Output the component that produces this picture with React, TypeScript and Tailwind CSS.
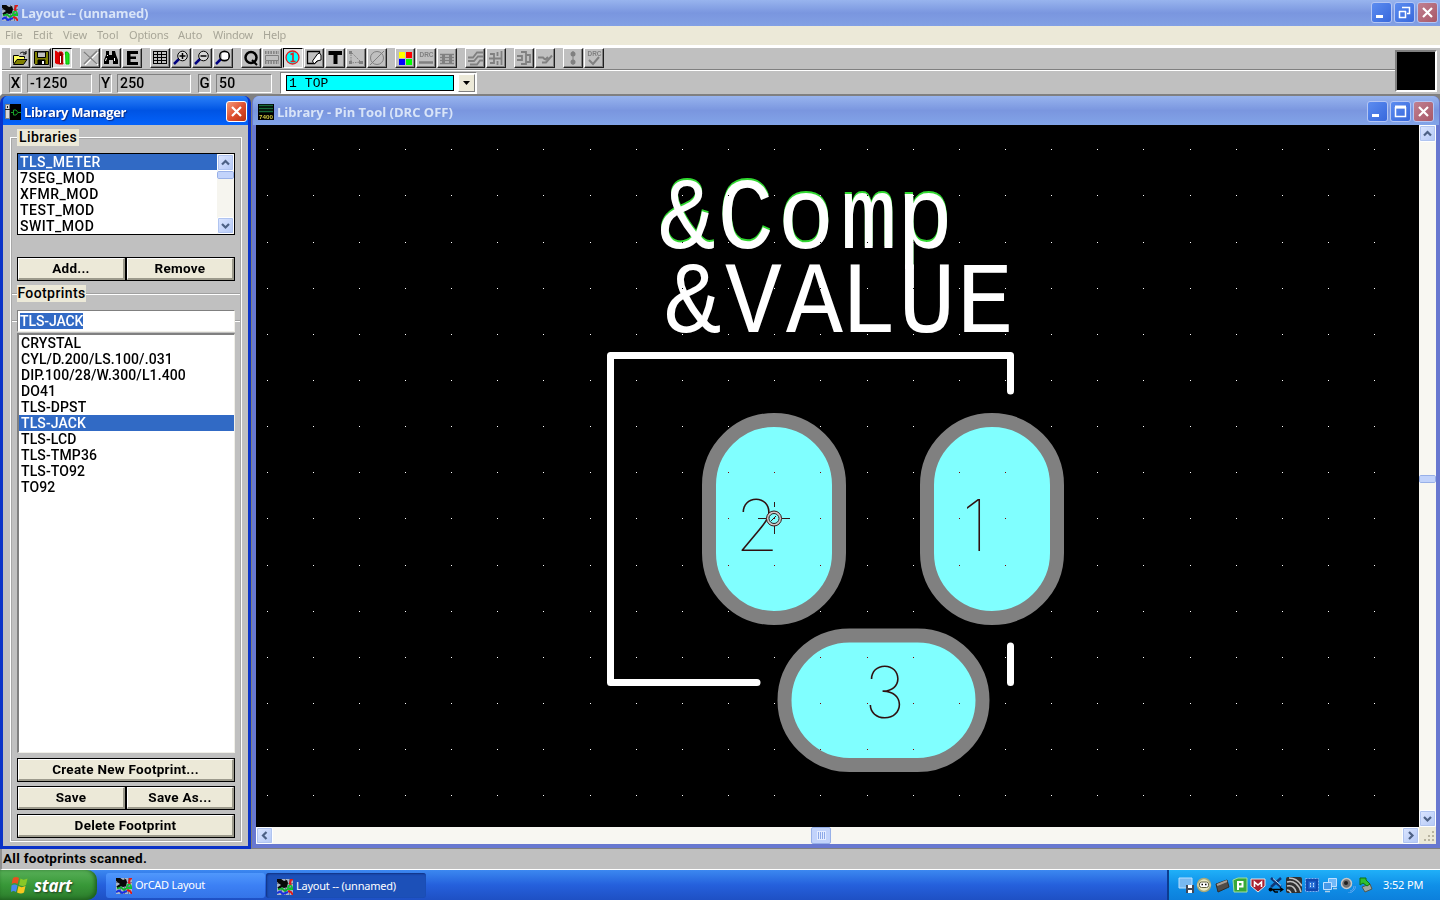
import React from "react";

type Kids = { children?: React.ReactNode };

const UI = "font-[Roboto,'Liberation_Sans',sans-serif]";

function Ic({ children, s = 16, vb = 16 }: Kids & { s?: number; vb?: number }) {
  return (
    <svg width={s} height={s} viewBox={`0 0 ${vb} ${vb}`} className="block shrink-0" fill="none" stroke="#000" strokeWidth="1">
      {children}
    </svg>
  );
}

function OrcadIcon() {
  return (
    <Ic>
      <rect width="16" height="16" fill="#a8b4c8" stroke="none" />
      <path d="M0 4.5h16M0 8.5h16M4.5 0v16M8.5 0v16M12.5 0v16" stroke="#6c7890" />
      <path d="M0 0h4l3 2 3-1 1 3-1 4-3 1-2-1-4 3v-3l3-2-4-3z" fill="#080808" stroke="none" />
      <path d="M16 0.500h-2l-1 4 1 2M11 12l3 1 2 3" stroke="#e01818" strokeWidth="2" />
      <path d="M1 10.500l4-1 3 2.500 3-2h5" stroke="#10b428" strokeWidth="1.800" />
      <circle cx="13" cy="8.500" r="2" stroke="#10c830" strokeWidth="1.500" />
      <path d="M0 14l3-1.500 3 2.500 5-2" stroke="#1830e0" strokeWidth="2" />
    </Ic>
  );
}

function PartIcon() {
  return (
    <Ic>
      <rect x="5" width="11" height="16" fill="#000" stroke="none" />
      <path d="M.5 .5h4v14h-4z" fill="#d8d8d8" stroke="#808080" />
      <path d="M0 5.500h5M2.500 2v2" stroke="#202020" />
      <path d="M6 8.500h2m5 0h3M8.500 6v5h2.500l2-2.500-2-2.500z" stroke="#18a028" />
    </Ic>
  );
}

function ChipIcon() {
  return (
    <Ic>
      <rect width="16" height="16" fill="#000" stroke="none" />
      <path d="M1 1.500h14M1 4.500h14M1 7.500h14" stroke="#186838" strokeWidth="1.500" />
      <text x="8" y="14.500" textAnchor="middle" textLength="14" lengthAdjust="spacingAndGlyphs" fontSize="6" fontWeight="700" fill="#d0c840" stroke="none" fontFamily="Liberation Sans">7400</text>
    </Ic>
  );
}

function WinBtn({ kind, live = false }: { kind: "min" | "max" | "restore" | "close"; live?: boolean }) {
  const bg =
    kind === "close"
      ? live
        ? "bg-linear-to-br from-[#f09878] via-[#e05030] to-[#b83010] border-white"
        : "bg-linear-to-br from-[#c08090] to-[#a85868] border-[#b4c6f4]"
      : "bg-linear-to-br from-[#5c8cf0] to-[#3868dc] border-[#b4c6f4]";
  return (
    <div className={`h-[21px] w-[21px] shrink-0 rounded-[3px] border ${bg}`}>
      <svg width="19" height="19" viewBox="0 0 19 19" fill="none" stroke="#fff">
        {kind === "min" && <path d="M4 13.500h7" strokeWidth="3" />}
        {kind === "max" && <path d="M4 5.500h11M4.500 5v9.500h10V5" strokeWidth="1.500" />}
        {kind === "max" && <path d="M4 5h11" strokeWidth="3" />}
        {kind === "restore" && <path d="M7 4.500h7.500v6h-2.500M4.500 8v6.500h6V8M4 8.500h7" strokeWidth="1.500" />}
        {kind === "close" && <path d="M5 5l9 9M14 5l-9 9" strokeWidth="2.200" />}
      </svg>
    </div>
  );
}

const D = "#808080";
const tools: { k: string; on?: boolean; g: React.ReactNode }[][] = [
  [
    { k: "open", g: <><path d="M3.500 15.500v-8h5l1 1h5v2" fill="#ffff60" /><path d="M3.500 16.500l3.500-5h10l-3.500 5z" fill="#808000" /><path d="M10 5.500c2-2 4-1.500 6 0m0-2.500v3h-3" /></> },
    { k: "save", g: <><path d="M3.500 3.500h14v13h-13l-1-1z" fill="#808000" /><path d="M6.500 4h8v5.500h-8z" fill="#c0c0c0" /><path d="M7 12h7v4.500h-7z" fill="#000" /><path d="M12 13v3" stroke="#fff" strokeWidth="2" /></> },
    { k: "lib", on: true, g: <><path d="M3.500 3l3 2v11l-3-1z" fill="#e00000" stroke="#e00000" /><path d="M7 4h3l1 2v10H7z" fill="#800000" stroke="#e00000" /><path d="M8.500 8v7" stroke="#fff" /><path d="M12 7h1.500v8H12z" fill="#fff" stroke="#fff" /><path d="M13.500 4h2l1.500 2v10h-3z" fill="#20e020" stroke="#00c000" /></> },
  ],
  [
    { k: "cut", g: <><path d="M5 5l13 12M18 4L5 17" stroke="#fff" strokeWidth="1.500" /><path d="M4 4l13 12M17 3L4 16" stroke={D} strokeWidth="1.500" /></> },
    { k: "find", g: <><path d="M5 3h3v4h3V3h3l1 4 2 5v4h-5v-4H8v4H3v-4l2-5z" fill="#000" stroke="none" /><path d="M6.500 7v1M5.500 10l-1 3M13.500 10v3" stroke="#fff" /></> },
    { k: "edit", g: <path d="M5 3h11v3H8.500v2.500H14v2.500H8.500V14H16v3H5z" fill="#000" stroke="none" /> },
  ],
  [
    { k: "grid", g: <path d="M3 3.500h14M3 6.500h14M3 9.500h14M3 12.500h14M3 15.500h14M3.500 3v13M7.500 3v13M11.500 3v13M16.500 3v13" /> },
    { k: "in", g: <><path d="M3 16l5-5" stroke="#000080" strokeWidth="2.500" /><circle cx="11.500" cy="8" r="4.800" fill="#d8d8d8" /><path d="M8.500 8h6M11.500 5v6" strokeWidth="1.500" /></> },
    { k: "out", g: <><path d="M3 16l5-5" stroke="#000080" strokeWidth="2.500" /><circle cx="11.500" cy="8" r="4.800" fill="#d8d8d8" /><path d="M8.500 8h6" strokeWidth="1.500" /></> },
    { k: "all", g: <><path d="M3 16l5-5" stroke="#000080" strokeWidth="2.500" /><circle cx="11.500" cy="8" r="4.800" fill="#c0c0c0" strokeWidth="1.500" /><rect x="9.500" y="5.500" width="5" height="5" fill="#fff" stroke="#fff" /></> },
  ],
  [
    { k: "query", g: <><circle cx="10" cy="9.500" r="5.500" strokeWidth="2.500" /><path d="M11 12l5 5" strokeWidth="2" /></> },
    { k: "comp", g: <><path d="M3 4.500h14M3 14.500h14" stroke={D} strokeDasharray="1.500 1.200" strokeWidth="3" /><path d="M3.500 7.500h13v5h-13z" stroke={D} /></> },
    { k: "pin", on: true, g: <><circle cx="9.500" cy="9.500" r="6.500" fill="#00ffff" stroke="#e02020" strokeWidth="1.300" /><path d="M7.500 6.500L10 5.500V13M7.500 13.500h5" stroke="#e02020" strokeWidth="1.600" /></> },
    { k: "obst", g: <><path d="M3.500 3.500h12v7l-5 5h-7z" strokeWidth="1.300" /><path d="M8.500 13l5-7 2-1 1.500 2v5l-4 1-3 3z" fill="#fff" /></> },
    { k: "text", g: <path d="M3.500 3h13.500v4h-4.500v9H8.500V7H3.500z" fill="#000" stroke="none" /> },
    { k: "conn", g: <><path d="M5 4v11l10-1z" stroke={D} strokeDasharray="1.500 1" /><path d="M3 3h3v3H3zM3 13h3v3H3zM13 13h4v3h-4z" fill={D} stroke="none" /></> },
    { k: "err", g: <><circle cx="10" cy="10" r="6.500" stroke={D} /><path d="M3 17L17 3" stroke={D} /></> },
  ],
  [
    { k: "color", g: <><rect x="4" y="4" width="6" height="6" fill="#ff0" stroke="none" /><rect x="11" y="4" width="6" height="6" fill="#f00" stroke="none" /><rect x="4" y="11" width="6" height="6" fill="#00f" stroke="none" /><rect x="11" y="11" width="6" height="6" fill="#0f0" stroke="none" /></> },
    { k: "drc", g: <><text x="10.500" y="9" textAnchor="middle" fontSize="7" textLength="14" lengthAdjust="spacingAndGlyphs" fontWeight="700" fill={D} stroke="none" fontFamily="Liberation Sans">DRC</text><path d="M3 14.500h14" stroke={D} strokeWidth="2.500" /></> },
    { k: "rec", g: <><path d="M3 6.500h14M3 9.500h14M3 12.500h14M3 15.500h14" stroke={D} strokeWidth="1.500" /><path d="M5 6h3v10H5zM12 6h3v10h-3z" fill={D} stroke="none" /></> },
  ],
  [
    { k: "r1", g: <path d="M3 9.500h5l4-5h6M3 13h6l4-4.500h5M5 16.500h7l3-4h3" stroke={D} strokeWidth="1.800" /> },
    { k: "r2", g: <path d="M4 6h4v9H4M3 10.500h12M11.500 4v4M11.500 13v4M15.500 3v14" stroke={D} strokeWidth="1.800" /> },
  ],
  [
    { k: "r3", g: <path d="M7 4h5v12H7M3 8h5v4H3M12 7h4v7h-4" stroke={D} strokeWidth="1.800" /> },
    { k: "r4", g: <path d="M3 9.500h5l2 2M7 14.500h4l6-7M10 12l3-3" stroke={D} strokeWidth="2" /> },
  ],
  [
    { k: "r5", g: <><path d="M10 3v14" stroke={D} /><circle cx="10" cy="6" r="2.500" fill={D} stroke="none" /><circle cx="10" cy="14" r="2.500" fill={D} stroke="none" /></> },
    { k: "r6", g: <><text x="10.500" y="8" textAnchor="middle" fontSize="7" textLength="14" lengthAdjust="spacingAndGlyphs" fontWeight="700" fill={D} stroke="none" fontFamily="Liberation Sans">DRC</text><path d="M5 12l4 4 6-7" stroke={D} strokeWidth="2" /></> },
  ],
];

function ToolButton({ on, children }: Kids & { on?: boolean }) {
  return (
    <div
      className={`mr-px h-[20px] w-[20px] overflow-hidden ${
        on
          ? "border border-t-black border-l-black border-r-white border-b-white bg-[#dcdcdc]"
          : "border-t border-r border-b border-l border-t-white border-r-[#202020] border-b-[#202020] border-l-white bg-[#c0c0c0] shadow-[inset_-1px_-1px_0_#808080]"
      }`}
    >
      <svg width="20" height="20" viewBox="1 1 20 20" fill="none" stroke="#000">
        {children}
      </svg>
    </div>
  );
}

function Readout({ label, value, vw, gap }: { label: string; value: string; vw: string; gap: string }) {
  const well = "border border-t-[#808080] border-l-[#808080] border-r-white border-b-white h-[19px] flex items-center";
  return (
    <div className={`flex ${gap}`}>
      <div className={`${well} w-[13px] justify-center text-[15px] font-medium`}>{label}</div>
      <div className={`${well} ${vw} ml-[5px] pl-[2px] text-[14px] font-medium tracking-[0.200px]`}>{value}</div>
    </div>
  );
}

function ScrollBtn({ dir }: { dir: "up" | "down" | "left" | "right" }) {
  const d = {
    up: "M4 9.500l3.500-3.500 3.500 3.500",
    down: "M4 6l3.500 3.500L11 6",
    left: "M9.500 4L6 7.500 9.500 11",
    right: "M6 4l3.500 3.500L6 11",
  }[dir];
  return (
    <div className="h-[17px] w-[17px] shrink-0 rounded-[2px] border border-white bg-linear-to-br from-[#dce6ff] to-[#b4c8f6] outline outline-[#b0c4f0] -outline-offset-2">
      <svg width="15" height="15" viewBox="0 0 15 15" fill="none" stroke="#4d6185" strokeWidth="2.200">
        <path d={d} />
      </svg>
    </div>
  );
}

function Btn({ children, className = "" }: Kids & { className?: string }) {
  return (
    <div className={`h-[24px] border border-black bg-[#ece9d8] ${className}`}>
      <div className="flex h-full items-center justify-center border-t border-r-2 border-b-2 border-l border-t-white border-r-[#9c9a8c] border-b-[#9c9a8c] border-l-white pb-px text-[13.500px] font-bold tracking-[0.270px]">
        {children}
      </div>
    </div>
  );
}

function GroupLabel({ children, w }: Kids & { w: string }) {
  return <div className={`${w} relative z-10 flex h-[17px] shrink-0 items-center justify-center bg-[#ece9d8] text-[14px] font-medium tracking-[0.400px]`}>{children}</div>;
}

const etch = "h-[2px] bg-linear-to-b from-[#a0a0a0] from-50% to-white to-50%";

const libraries = ["TLS_METER", "7SEG_MOD", "XFMR_MOD", "TEST_MOD", "SWIT_MOD"];
const footprints = ["CRYSTAL", "CYL/D.200/LS.100/.031", "DIP.100/28/W.300/L1.400", "DO41", "TLS-DPST", "TLS-JACK", "TLS-LCD", "TLS-TMP36", "TLS-TO92", "TO92"];

function LibraryManager() {
  return (
    <section className="flex h-[753px] w-[251px] shrink-0 flex-col rounded-t-[7px] border-x-[3px] border-b-[3px] border-[#0a32c8] bg-[#0a50e8]">
      <header className="flex h-[29px] shrink-0 items-center rounded-t-[5px] bg-linear-to-b from-[#2a80f8] via-[#0054e4] to-[#0462fa] pt-[2px] pr-[1px] pl-[2px]">
        <PartIcon />
        <h2 className="ml-[3px] flex-1 pt-[2px] font-['Open_Sans'] text-[13px] font-bold tracking-[-0.350px] whitespace-nowrap text-white [text-shadow:1px_1px_1px_#0a2880]">Library Manager</h2>
        <WinBtn kind="close" live />
      </header>
      <div className="min-h-0 flex-1 bg-[#c0c0c0] px-[7px] pt-[12px] text-black">
        <div className="h-[705px] w-[232px] border border-white px-[6px] outline outline-[#a8a8a8] -outline-offset-2">
          <div className="-mt-[9px] h-[17px]">
            <GroupLabel w="w-[62px]">Libraries</GroupLabel>
          </div>
          <div className="mt-[7px] flex h-[82px] w-[218px] border border-black bg-white">
            <ul className="min-w-0 flex-1 overflow-hidden">
              {libraries.map((l, i) => (
                <li key={l} className={`h-[16px] pl-[2px] text-[14px] leading-[16px] font-medium tracking-[0.500px] ${i === 0 ? "bg-[#316ac5] text-white" : ""}`}>
                  {l}
                </li>
              ))}
            </ul>
            <div className="flex w-[17px] flex-col bg-[#f6f5ef]">
              <ScrollBtn dir="up" />
              <div className="h-[8px] rounded-[2px] border border-white bg-[#c2d3fb] outline outline-[#98b0e8] -outline-offset-1" />
              <div className="flex-1" />
              <ScrollBtn dir="down" />
            </div>
          </div>
          <div className="mt-[22px] flex w-[218px]">
            <Btn className="w-[109px]">Add...</Btn>
            <Btn className="w-[109px]">Remove</Btn>
          </div>
          <div className="mt-[4px] -mr-[5px] -ml-[6px] flex items-center">
            <div className={`${etch} w-[6px]`} />
            <GroupLabel w="w-[69px]">Footprints</GroupLabel>
            <div className={`${etch} flex-1`} />
          </div>
          <div className="mt-[8px] -mr-[5px] -ml-[6px] flex items-center">
            <div className={`${etch} w-[6px]`} />
            <div className="flex h-[22px] w-[218px] items-center border border-t-[#808080] border-r-[#f0efe8] border-b-[#f0efe8] border-l-[#808080] bg-white pb-px pl-[2px]">
              <span className="bg-[#316ac5] text-[14px] leading-[16px] font-medium tracking-[-0.100px] text-white">TLS-JACK</span>
            </div>
            <div className={`${etch} flex-1`} />
          </div>
          <ul className="mt-[1px] h-[420px] w-[218px] border-t-2 border-r border-b border-l-2 border-t-[#808080] border-r-[#f0efe8] border-b-[#f0efe8] border-l-[#808080] bg-white">
            {footprints.map((f, i) => (
              <li key={f} className={`h-[16px] pl-[2px] text-[14px] leading-[16px] font-medium tracking-[0.120px] whitespace-nowrap ${i === 5 ? "bg-[#316ac5] text-white" : ""}`}>
                {f}
              </li>
            ))}
          </ul>
          <Btn className="mt-[5px] w-[218px]">Create New Footprint...</Btn>
          <div className="mt-[4px] flex w-[218px]">
            <Btn className="w-[109px]">Save</Btn>
            <Btn className="w-[109px]">Save As...</Btn>
          </div>
          <Btn className="mt-[4px] w-[218px]">Delete Footprint</Btn>
        </div>
      </div>
    </section>
  );
}

const dots: [number, number][] = [];
for (let r = -8; r <= 6; r++) for (let c = -11; c <= 13; c++) dots.push([Math.round(774.2 + c * 46.15), Math.round(518.4 + r * 46.15)]);

function Board() {
  const mono = { fontFamily: "Liberation Mono", fontSize: 102, fill: "#fff" };
  const thin = { fontFamily: "Inter", fontWeight: 100, fontSize: 71, fill: "#301010" };
  return (
    <svg width="1163" height="702" viewBox="256 125 1163 702" className="block bg-black">
      <g transform="scale(.93 1)">
        <text {...mono} x="708.600 771.300 835.900 903.500 964.100" y="248" className="drop-shadow-[0_-2px_0_#30d830]">&amp;Comp</text>
        <text {...mono} x="715.200 779.700 845.200 902.900 966.100 1028.700" y="332">&amp;VALUE</text>
      </g>
      <g fill="none" stroke="#fff" strokeWidth="7" strokeLinecap="round" strokeLinejoin="round">
        <path d="M1010.500 391v-35.500H610.500v327H757M1010.500 646v36.500" />
      </g>
      <g fill="#80ffff" stroke="#808080" strokeWidth="14">
        <rect x="709" y="420" width="130" height="198" rx="65" />
        <rect x="927" y="420" width="130" height="198" rx="65" />
        <rect x="784.500" y="635.500" width="198" height="129.500" rx="65" />
      </g>
      <g fill="#fff" className="mix-blend-difference">
        {dots.map(([x, y]) => (
          <rect key={`${x}-${y}`} x={x} y={y} width="1" height="1" />
        ))}
      </g>
      <text {...thin} x="735" y="551">2</text>
      <text {...thin} x="962" y="551">1</text>
      <text {...thin} x="864" y="718">3</text>
      <g fill="none" stroke="#301818">
        <circle cx="774" cy="518.500" r="6.500" stroke="#d8c8c8" strokeWidth="2" />
        <circle cx="774" cy="518.500" r="7.500" />
        <circle cx="774" cy="518.500" r="5" />
        <path d="M758 518.500h8M782 518.500h8M774.500 526v8M774.500 502v5M771 521l5-5" />
      </g>
    </svg>
  );
}

function PinTool() {
  return (
    <section className="flex h-[752px] min-w-0 flex-1 flex-col rounded-t-[7px] border-r-[4px] border-b-[4px] border-l-[4px] border-[#6878d0] bg-[#7b99e1]">
      <header className="-mx-[3px] flex h-[29px] shrink-0 items-center rounded-t-[6px] bg-linear-to-b from-[#98b4ee] via-[#7a96df] to-[#82a4e8] pt-[2px] pr-[5px] pl-[5px]">
        <ChipIcon />
        <h2 className="ml-[3px] flex-1 pt-[2px] font-['Open_Sans'] text-[13px] font-bold text-[#d8e4f8]">Library - Pin Tool (DRC OFF)</h2>
        <div className="flex gap-[2px]">
          <WinBtn kind="min" />
          <WinBtn kind="max" />
          <WinBtn kind="close" />
        </div>
      </header>
      <div className="flex">
        <Board />
        <div className="flex w-[17px] flex-col bg-[#f8f7f2]">
          <ScrollBtn dir="up" />
          <div className="h-[333px]" />
          <div className="h-[8px] rounded-[2px] border border-white bg-[#c2d3fb] outline outline-[#98b0e8] -outline-offset-1" />
          <div className="flex-1" />
          <ScrollBtn dir="down" />
        </div>
      </div>
      <div className="flex h-[17px] bg-[#f8f7f2]">
        <ScrollBtn dir="left" />
        <div className="w-[538px]" />
        <div className="flex h-[17px] w-[20px] items-center justify-center gap-px rounded-[2px] border border-[#98b0e8] bg-[#c2d3fb]">
          {[0, 1, 2, 3].map((i) => (
            <i key={i} className="h-[7px] w-px bg-[#8ca8e8] outline outline-[#e4ecff] -outline-offset-0" />
          ))}
        </div>
        <div className="flex-1" />
        <ScrollBtn dir="right" />
        <div className="h-[17px] w-[17px] bg-[#ece9d8]">
          <svg width="17" height="17" fill="#b8b4a0">
            <path d="M13 4h2v2h-2zM9 8h2v2H9zM13 8h2v2h-2zM5 12h2v2H5zM9 12h2v2H9zM13 12h2v2h-2z" />
          </svg>
        </div>
      </div>
    </section>
  );
}

function Tray() {
  return (
    <div className="flex gap-[2px]">
      <Ic><path d="M1 1h13v10H1z" fill="#78b8f0" stroke="#b8e0ff" /><path d="M8 8h8v8H8z" fill="#404858" stroke="none" /><path d="M10 8h4v3h-4zM10 13h4v3h-4z" fill="#fff" stroke="none" /></Ic>
      <Ic><circle cx="8" cy="8" r="6.500" fill="#e8e8c0" stroke="#a8a878" strokeWidth="1.500" /><path d="M1 8h14" stroke="#c8c8a0" strokeWidth="3" /><rect x="3.500" y="5" width="9" height="5.500" rx="2" fill="#fff" stroke="#606040" /><path d="M5.500 7.500h1.500M9 7.500h1.500" strokeWidth="1.500" /></Ic>
      <Ic><path d="M2 7l11-4 2 7-11 5z" fill="#504c48" stroke="#302c28" /><path d="M3 8l10-4" stroke="#a8a098" strokeWidth="2" /></Ic>
      <Ic><path d="M1 3l5-2h9v14H2z" fill="#38a838" stroke="#a0e0a0" /><path d="M6 13V5h4.500v4.500H6" stroke="#fff" strokeWidth="2" /></Ic>
      <Ic><path d="M1 2h14v7l-7 6-7-6z" fill="#a82030" stroke="#e8e8e8" /><path d="M4.500 10V5L8 8l3.500-3v5" stroke="#fff" strokeWidth="1.600" /></Ic>
      <Ic><path d="M3 1l10 9M13 1L3 10" stroke="#103878" strokeWidth="2.500" /><path d="M5 1.500l8 7" stroke="#c0d8f0" /><path d="M1 12.500h14M4 12l3 3h3M12 10.500l3 2-3 2" stroke="#000" strokeWidth="1.300" /><circle cx="2.500" cy="12.500" r="1.500" fill="#000" /></Ic>
      <Ic><rect width="16" height="16" rx="2" fill="#303030" stroke="none" /><path d="M1 5c7-2 12 3 14 10M1 9c5-1 8 2 9 6M1 13c2 0 3 1 4 3M3 1c6 0 10 3 13 8" stroke="#c0c0c0" strokeWidth="1.600" /></Ic>
      <Ic><path d="M1.500 1.500h13v13h-13z" fill="#1048b0" stroke="#80b0f0" strokeDasharray="2 1" /><path d="M4.500 4.500h7v7h-7z" fill="#2870d8" stroke="#1858c0" /><path d="M6.500 6v4M9.500 6v4" stroke="#d0e8ff" strokeDasharray="1.500 1" /></Ic>
      <Ic><path d="M6.500 1.500h8v8h-8z" fill="#70b8f8" stroke="#c0e0ff" /><path d="M1.500 5.500h8v7h-8z" fill="#4898e8" stroke="#c0e0ff" /><path d="M3 14.500h5M11 11.500h4" stroke="#b0d0e8" strokeWidth="1.500" /></Ic>
      <Ic><circle cx="6.500" cy="6.500" r="5" fill="#707070" stroke="#c8c8c8" strokeWidth="1.500" /><circle cx="6" cy="6" r="2" fill="#202020" stroke="none" /><path d="M10 14c2 0 4-2 4-5M8 16c4 0 7-3 8-7" stroke="#60a8f0" /></Ic>
      <Ic><path d="M4 10l8-3 2 5-7 3z" fill="#a0a8a0" stroke="#505850" /><path d="M2 1h6v2l4 4-3 2-4-3-3 2z" fill="#30c030" stroke="#107010" /></Ic>
    </div>
  );
}

export default function App() {
  return (
    <div className={`flex h-[900px] w-[1440px] flex-col overflow-hidden bg-[#808080] ${UI}`}>
      <header className="flex h-[26px] shrink-0 items-center bg-linear-to-b from-[#98b4ee] via-[#7a96df] to-[#82a0e4] pr-[2px] pb-px pl-[2px]">
        <OrcadIcon />
        <h1 className="ml-[3px] flex-1 pt-[3px] font-['Open_Sans'] text-[13px] font-bold tracking-[-0.200px] text-[#d8e4f8]">Layout -- (unnamed)</h1>
        <div className="flex gap-[2px]">
          <WinBtn kind="min" />
          <WinBtn kind="restore" />
          <WinBtn kind="close" />
        </div>
      </header>
      <nav className="flex h-[22px] shrink-0 items-center border-b-[3px] border-white bg-[#ece9d8] font-['Noto_Sans'] text-[11px] text-[#a8a698]">
        <span className="ml-[5px] w-[28px]">File</span>
        <span className="w-[30px]">Edit</span>
        <span className="w-[34px]">View</span>
        <span className="w-[32px]">Tool</span>
        <span className="w-[49px] tracking-[-0.200px]">Options</span>
        <span className="w-[35px]">Auto</span>
        <span className="w-[50px] tracking-[-0.300px]">Window</span>
        <span className="tracking-[-0.200px]">Help</span>
      </nav>
      <div className="flex h-[48px] shrink-0 border-b-2 border-l-2 border-b-[#808080] border-l-white bg-[#c0c0c0]">
        <div className="flex min-w-0 flex-1 flex-col">
          <div className="flex h-[22px] shrink-0 border-b border-[#808080] pl-[8px]">
            {tools.map((group, i) => (
              <div key={i} className="mr-[7px] flex">
                {group.map((t) => (
                  <ToolButton key={t.k} on={t.on}>{t.g}</ToolButton>
                ))}
              </div>
            ))}
          </div>
          <div className="flex h-[24px] items-start border-t border-white pl-[7px] text-black">
            <Readout label="X" value="-1250" vw="w-[65px]" gap="mt-[3px]" />
            <Readout label="Y" value="250" vw="w-[74px]" gap="mt-[3px] ml-[7px]" />
            <Readout label="G" value="50" vw="w-[56px]" gap="mt-[3px] ml-[7px]" />
            <div className="mt-px ml-[8px] flex h-[22px] w-[197px] justify-between border border-t-[#808080] border-l-[#808080] border-r-white border-b-white bg-white py-px pr-px pl-[5px]">
              <div className="my-px flex w-[168px] items-center border border-black bg-[#00ffff] pl-[2px] font-['Liberation_Mono'] text-[13px] leading-none tracking-[0.100px] whitespace-pre">1 TOP</div>
              <div className="flex w-[17px] items-center justify-center border border-t-white border-r-[#808080] border-b-[#808080] border-l-white bg-[#ece9d8]">
                <svg width="7" height="4"><path d="M0 0h7L3.500 4z" /></svg>
              </div>
            </div>
          </div>
        </div>
        <div className="mt-[2px] mr-[3px] h-[42px] w-[42px] border-2 border-t-[#808080] border-r-white border-b-white border-l-[#808080] bg-black" />
      </div>
      <main className="flex h-[753px] shrink-0 gap-px">
        <LibraryManager />
        <PinTool />
      </main>
      <div className="flex h-[21px] shrink-0 items-center border-b border-l-2 border-b-white border-l-[#909090] bg-[#c0c0c0] pb-[2px] pl-px text-[13.500px] font-bold tracking-[0.270px] text-black">All footprints scanned.</div>
      <footer className="flex h-[30px] shrink-0 bg-linear-to-b from-[#3c88f0] via-[#2560dc] to-[#1e50c4]">
        <div className="flex w-[97px] items-center rounded-r-[10px] bg-linear-to-b from-[#58b058] via-[#389838] to-[#2c7c2c] pl-[11px] shadow-[inset_-2px_-1px_4px_#1c5c1c]">
          <svg width="18" height="18" viewBox="0 0 18 18">
            <path d="M2 2c2-1.500 4-1.500 6 0L6.500 8c-2-1.500-4-1.500-6 0z" fill="#e85020" />
            <path d="M9.500 2.500c2 1.500 4 1.500 7 0L15 9c-2 1.300-4 1.300-7 0z" fill="#88c828" />
            <path d="M.500 9.500c2-1.500 4-1.500 6 0L5 16c-2-1.500-3-1.500-5 0z" fill="#4888f0" />
            <path d="M7.500 10c2 1.500 4 1.500 7 0L13 16.500c-2 1.300-4 1.300-7 0z" fill="#f8c820" />
          </svg>
          <span className="ml-[5px] font-['Open_Sans'] text-[17px] leading-none font-bold tracking-[-0.300px] text-white italic [text-shadow:1px_1px_2px_#204020]">start</span>
        </div>
        <div className="mt-[3px] ml-[9px] flex h-[25px] w-[159px] items-center rounded-[3px] bg-linear-to-b from-[#5098fc] via-[#3c80f4] to-[#3474e8] pl-[10px] font-['Noto_Sans'] text-[11px] tracking-[-0.250px] text-white">
          <OrcadIcon />
          <span className="ml-[3px]">OrCAD Layout</span>
        </div>
        <div className="mt-[3px] ml-[1px] flex h-[25px] w-[160px] items-center rounded-[3px] bg-[#1c50b8] pt-[2px] pl-[11px] font-['Noto_Sans'] text-[11px] tracking-[-0.230px] text-white shadow-[inset_1px_1px_2px_#103080]">
          <OrcadIcon />
          <span className="ml-[3px]">Layout -- (unnamed)</span>
        </div>
        <div className="ml-auto flex w-[273px] items-center border-l-2 border-[#0c3c90] bg-linear-to-b from-[#20b0f8] via-[#1090e8] to-[#0c80dc] pl-[9px]">
          <Tray />
          <span className="ml-[9px] font-['Noto_Sans'] text-[11px] tracking-[-0.150px] text-white">3:52 PM</span>
        </div>
      </footer>
    </div>
  );
}
